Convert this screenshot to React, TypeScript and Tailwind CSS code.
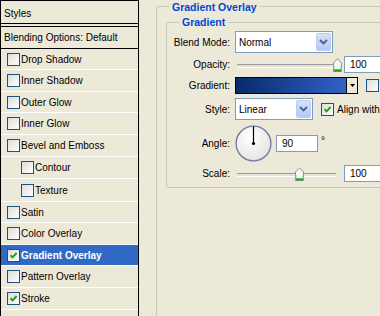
import React from 'react';

type Effect = { label: string; h: string; checked?: boolean; indent?: boolean; selected?: boolean };

const effects: Effect[] = [
  { label: 'Drop Shadow', h: 'h-[21px]' },
  { label: 'Inner Shadow', h: 'h-[22px]' },
  { label: 'Outer Glow', h: 'h-[21px]' },
  { label: 'Inner Glow', h: 'h-[22px]' },
  { label: 'Bevel and Emboss', h: 'h-[22px]' },
  { label: 'Contour', h: 'h-[22px]', indent: true },
  { label: 'Texture', h: 'h-[23px]', indent: true },
  { label: 'Satin', h: 'h-[21px]' },
  { label: 'Color Overlay', h: 'h-[22px]' },
  { label: 'Gradient Overlay', h: 'h-[21px]', checked: true, selected: true },
  { label: 'Pattern Overlay', h: 'h-[22px]' },
  { label: 'Stroke', h: 'h-[22px]', checked: true },
];

function CheckBox({ checked }: { checked?: boolean }) {
  return (
    <span className="flex size-[13px] flex-none items-center justify-center border border-[#1C5180] bg-gradient-to-br from-[#DCDCD7] to-white">
      {checked && (
        <svg width="9" height="9" viewBox="0 0 9 9">
          <path d="M1.5 4.2 L3.6 6.4 L7.6 2" fill="none" stroke="#21A121" strokeWidth="2" />
        </svg>
      )}
    </span>
  );
}

function Combo({ value, w }: { value: string; w: string }) {
  return (
    <div className={`flex h-[22px] flex-none items-center border border-[#7F9DB9] bg-white ${w}`}>
      <span className="flex-1 pl-[3px]">{value}</span>
      <span className="mr-[1px] flex h-[18px] w-[15px] items-center justify-center rounded-[2px] border border-[#BCCDF4] bg-gradient-to-b from-[#D4E0FC] to-[#B6CAF6]">
        <svg width="9" height="6" viewBox="0 0 9 6">
          <path d="M1 1 L4.5 4.5 L8 1" fill="none" stroke="#4D6185" strokeWidth="1.8" />
        </svg>
      </span>
    </div>
  );
}

function Slider({ thumb }: { thumb: number }) {
  return (
    <div className="relative h-[16px] w-[107px] flex-none">
      <div className="mt-[7px] ml-[2px] h-[4px] w-[99px] border-t border-b border-t-[#9D9C99] border-b-white bg-[#E3E2DA]" />
      <svg className="absolute top-[1px]" style={{ left: thumb }} width="9" height="14" viewBox="0 0 9 14">
        <path d="M0.5 5 L4.5 0.8 L8.5 5 L8.5 13.5 L0.5 13.5 Z" fill="#F7F7F4" stroke="#8E8F8F" />
        <path d="M1 12.3 L8 12.3" stroke="#21A121" strokeWidth="2" />
        <path d="M1 8 L1 12 M8 8 L8 12" stroke="#7ED37E" strokeWidth="1" />
      </svg>
    </div>
  );
}

function NumField({ value, w }: { value: string; w: string }) {
  return (
    <div className={`flex h-[17px] flex-none items-center border border-[#7F9DB9] bg-white pl-[5px] ${w}`}>{value}</div>
  );
}

function Row({ label, mt, children }: { label: string; mt: string; children: React.ReactNode }) {
  return (
    <div className={`flex items-center ${mt}`}>
      <span className="w-[63px] flex-none text-right">{label}</span>
      <div className="ml-[5px] flex items-center">{children}</div>
    </div>
  );
}

export default function App() {
  return (
    <div className="flex h-[316px] w-[380px] overflow-hidden bg-[#ECE9D8] font-['Liberation_Sans',Arial,sans-serif] text-[10px] text-black">
      {/* list of effects */}
      <div className="flex h-[316px] w-[139px] flex-none flex-col border-r border-l border-black">
        <div className="flex h-[24px] items-center border-t border-b border-black pt-[2px] pl-[3px]">Styles</div>
        <div className="mt-[2px] flex h-[23px] items-center border-t border-b border-black pl-[3px]">
          Blending Options: Default
        </div>
        {effects.map((e) => (
          <div
            key={e.label}
            className={`flex items-center border-b border-white ${e.h} ${e.indent ? 'pl-[20px]' : 'pl-[6px]'} ${
              e.selected ? 'bg-[#316AC5] font-bold text-white' : ''
            }`}
          >
            <CheckBox checked={e.checked} />
            <span className="ml-[1px]">{e.label}</span>
          </div>
        ))}
      </div>

      {/* settings */}
      <fieldset className="ml-[17px] h-[400px] w-[260px] flex-none rounded-[3px] border border-[#C9C6B6]">
        <legend className="ml-[12px] px-[3px] pt-[1px] text-[10.5px] leading-[12px] font-bold text-[#0046D5]">Gradient Overlay</legend>
        <fieldset className="mt-[3px] ml-[9px] h-[172px] w-[240px] rounded-[3px] border border-[#C9C6B6]">
          <legend className="ml-[12px] px-[3px] text-[10.5px] leading-[12px] font-bold text-[#0046D5]">Gradient</legend>

          <Row label="Blend Mode:" mt="mt-[3px]">
            <Combo value="Normal" w="w-[98px]" />
          </Row>

          <Row label="Opacity:" mt="mt-[3px]">
            <Slider thumb={98} />
            <div className="ml-[2px]">
              <NumField value="100" w="w-[44px]" />
            </div>
          </Row>

          <Row label="Gradient:" mt="mt-[4px]">
            <div className="flex h-[17px] w-[123px] flex-none border border-black">
              <div className="flex-1 bg-gradient-to-r from-[#082A6C] to-[#3163C6]" />
              <div className="flex w-[11px] items-center justify-center border-l border-black bg-[#ECE9D8]">
                <svg width="5" height="3" viewBox="0 0 5 3">
                  <path d="M0 0 L5 0 L2.5 3 Z" fill="#000" />
                </svg>
              </div>
            </div>
            <div className="ml-[8px] flex items-center">
              <CheckBox />
            </div>
          </Row>

          <Row label="Style:" mt="mt-[4px]">
            <Combo value="Linear" w="w-[78px]" />
            <div className="ml-[8px] flex items-center">
              <CheckBox checked />
              <span className="ml-[3px] whitespace-nowrap">Align with Layer</span>
            </div>
          </Row>

          <Row label="Angle:" mt="mt-[5px]">
            <svg width="37" height="37" viewBox="0 0 37 37" className="flex-none">
              <defs>
                <radialGradient id="dial" cx="0.4" cy="0.35" r="0.7">
                  <stop offset="0" stopColor="#FFFFFF" />
                  <stop offset="1" stopColor="#E4E3DE" />
                </radialGradient>
              </defs>
              <circle cx="18.5" cy="18.5" r="17.4" fill="url(#dial)" stroke="#6C7CA5" strokeWidth="1.4" />
              <line x1="18.5" y1="18.5" x2="18.5" y2="1.5" stroke="#000" strokeWidth="1.2" />
              <circle cx="18.5" cy="18.5" r="1.6" fill="#000" />
            </svg>
            <div className="ml-[4px] flex items-start">
              <NumField value="90" w="w-[42px]" />
              <span className="ml-[3px] leading-[12px]">°</span>
            </div>
          </Row>

          <Row label="Scale:" mt="mt-[3px]">
            <Slider thumb={60} />
            <div className="ml-[2px]">
              <NumField value="100" w="w-[44px]" />
            </div>
          </Row>
        </fieldset>
      </fieldset>
    </div>
  );
}
